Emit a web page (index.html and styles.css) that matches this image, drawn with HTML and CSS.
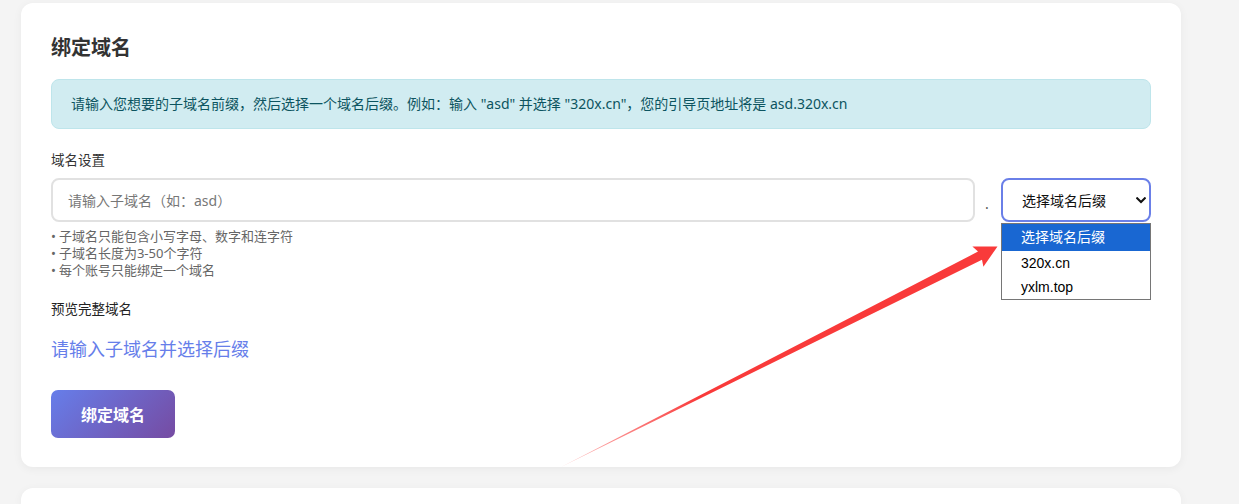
FILE: index.html
```html
<!DOCTYPE html>
<html lang="zh-CN">
<head>
<meta charset="utf-8">
<title>绑定域名</title>
<link rel="stylesheet" href="styles.css">
</head>
<body>
<div class="page">
  <section class="card">
    <h2 class="card-title">绑定域名</h2>
    <div class="info">请输入您想要的子域名前缀，然后选择一个域名后缀。例如：输入 "asd" 并选择 "320x.cn"，您的引导页地址将是 asd.320x.cn</div>

    <div class="field-label">域名设置</div>
    <div class="domain-row">
      <div class="input">请输入子域名（如：asd）</div>
      <span class="dot">.</span>
      <div class="select-wrap">
        <div class="select">
          <span>选择域名后缀</span>
          <svg class="chevron" width="10" height="7" viewBox="0 0 10 7"><path d="M1.2 1.2 L5 5 L8.8 1.2" fill="none" stroke="#111" stroke-width="2" stroke-linecap="square"/></svg>
        </div>
        <div class="listbox">
          <div class="option selected">选择域名后缀</div>
          <div class="option">320x.cn</div>
          <div class="option">yxlm.top</div>
        </div>
      </div>
    </div>
    <ul class="hints">
      <li>子域名只能包含小写字母、数字和连字符</li>
      <li>子域名长度为3-50个字符</li>
      <li>每个账号只能绑定一个域名</li>
    </ul>

    <div class="field-label preview-label">预览完整域名</div>
    <div class="preview">请输入子域名并选择后缀</div>

    <button class="btn">绑定域名</button>
  </section>
  <section class="card-next"></section>
</div>
<svg class="annotation" width="1239" height="504" viewBox="0 0 1239 504">
  <defs>
    <linearGradient id="fade" x1="560" y1="468" x2="700" y2="397" gradientUnits="userSpaceOnUse">
      <stop offset="0" stop-color="#f93a3a" stop-opacity="0.3"/>
      <stop offset="1" stop-color="#f93a3a" stop-opacity="1"/>
    </linearGradient>
  </defs>
  <polygon points="561,467 978,251.6 972.4,246.6 997.5,246.5 983.4,266.7 982,259.8" fill="url(#fade)"/>
</svg>
</body>
</html>
```

FILE: styles.css
```css
html, body {
  margin: 0;
  padding: 0;
}
body {
  background: #f4f4f4;
  font-family: "Noto Sans", "Noto Sans CJK SC", sans-serif;
  color: #333;
  position: relative;
  height: 504px;
  overflow: hidden;
}
.page {
  padding: 3px 0 0 21px;
  display: flex;
  flex-direction: column;
  gap: 21px;
}
.card {
  width: 1100px;
  background: #fff;
  border-radius: 12px;
  box-shadow: 0 2px 10px rgba(0, 0, 0, 0.05);
  padding: 30px 30px 29px;
  display: flex;
  flex-direction: column;
  align-items: flex-start;
}
.card-next {
  width: 1160px;
  height: 16px;
  background: #fff;
  border-radius: 12px 12px 0 0;
  box-shadow: 0 2px 10px rgba(0, 0, 0, 0.05);
}
.card-title {
  margin: 0 0 16px;
  font-size: 20px;
  line-height: 30px;
  font-weight: 700;
  color: #333;
}
.info {
  align-self: stretch;
  background: #d1ecf1;
  border: 1px solid #bee5eb;
  color: #0c5460;
  border-radius: 8px;
  padding: 14px 19px;
  font-size: 14px;
  line-height: 20px;
  margin-bottom: 21px;
}
.field-label {
  font-size: 13.5px;
  line-height: 20px;
  color: #333;
  margin-bottom: 8px;
}
.domain-row {
  align-self: stretch;
  display: flex;
  align-items: center;
  gap: 10px;
}
.input {
  flex: 1;
  box-sizing: border-box;
  height: 44px;
  border: 2px solid #e1e1e1;
  border-radius: 8px;
  padding: 0 15px;
  display: flex;
  align-items: center;
  font-size: 14px;
  color: #777;
}
.dot {
  width: 6px;
  font-size: 14px;
  color: #555;
  padding-top: 6px;
}
.select-wrap {
  position: relative;
  width: 150px;
}
.select {
  box-sizing: border-box;
  height: 44px;
  border: 2px solid #6a7fe8;
  border-radius: 8px;
  padding: 0 3px 0 19px;
  display: flex;
  align-items: center;
  justify-content: space-between;
  font-size: 14px;
  color: #111;
}
.chevron {
  display: block;
}
.listbox {
  position: absolute;
  left: 0;
  top: 45px;
  width: 150px;
  box-sizing: border-box;
  border: 1px solid #767676;
  background: #fff;
  font-family: "Liberation Sans", "Noto Sans CJK SC", sans-serif;
  font-size: 14px;
  color: #000;
  z-index: 2;
}
.option {
  height: 24px;
  line-height: 25px;
  padding-left: 19px;
}
.option.selected {
  height: 27px;
  line-height: 27px;
  background: #1967d2;
  color: #fff;
}
.hints {
  list-style: none;
  margin: 6px 0 0;
  padding: 0;
  font-size: 13px;
  line-height: 17px;
  color: #666;
}
.hints li::before {
  content: "•";
  margin-right: 3px;
}
.preview-label {
  margin: 20px 0 0;
  color: #222;
}
.preview {
  margin-top: 17px;
  font-size: 18px;
  line-height: 26px;
  color: #667eea;
}
.btn {
  margin-top: 28px;
  height: 48px;
  padding: 0 30px;
  border: none;
  border-radius: 7px;
  background: linear-gradient(135deg, #667eea 0%, #764ba2 100%);
  color: #fff;
  font-family: "Noto Sans", "Noto Sans CJK SC", sans-serif;
  font-size: 16px;
  font-weight: 600;
}
.annotation {
  position: absolute;
  left: 0;
  top: 0;
  pointer-events: none;
}
```
